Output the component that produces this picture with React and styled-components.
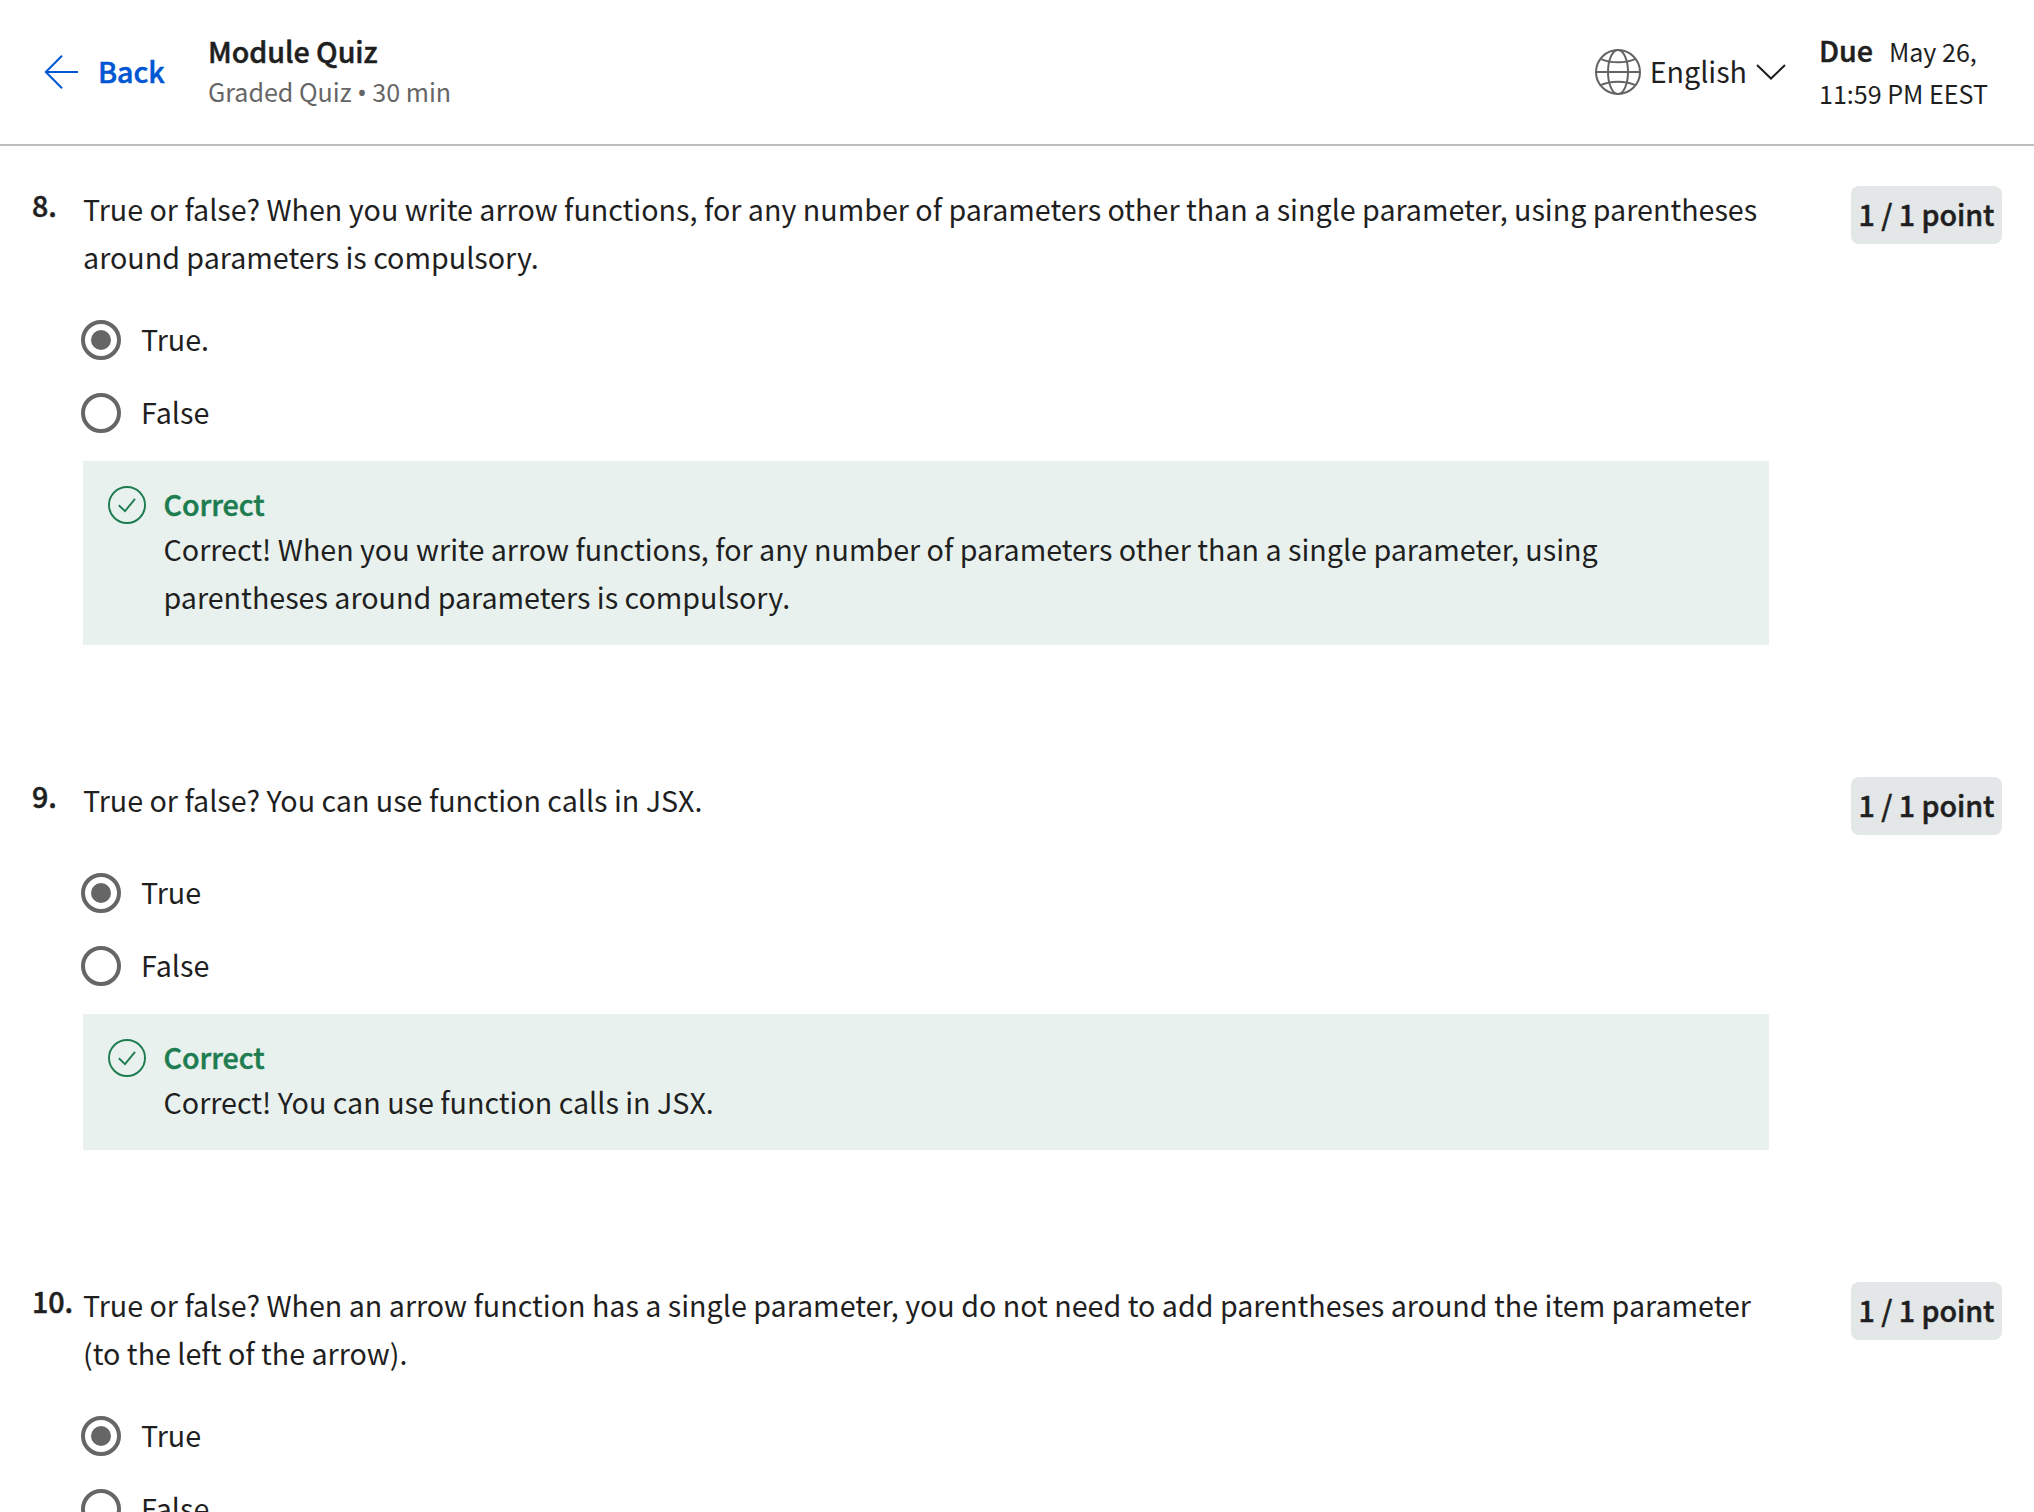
import React from "react";
import styled, { createGlobalStyle, css } from "styled-components";

const Global = createGlobalStyle`
  * { box-sizing: border-box; }
  html, body { margin: 0; height: 100%; overflow: hidden; }
  body {
    background: #fff;
    color: #1f1f1f;
    font-family: "Noto Sans CJK SC", "Noto Sans", sans-serif;
    font-size: 28.66px;
    line-height: 48px;
  }
`;

const semibold = css`
  font-weight: 500;
  letter-spacing: -0.05px;
  -webkit-text-stroke: 0.5px currentColor;
`;

const Page = styled.div`
  height: 1512px;
  overflow: hidden;
`;

const Header = styled.header`
  display: flex;
  align-items: center;
  justify-content: space-between;
  height: 146px;
  padding: 0 33px 0 44px;
  border-bottom: 2px solid #bdbdbd;
`;

const HeaderSide = styled.div`
  display: flex;
  align-items: center;
`;

const BackLink = styled.a`
  display: flex;
  align-items: center;
  gap: 18px;
  width: 164px;
  color: #0056d2;
  text-decoration: none;
  ${semibold}
`;

const BackText = styled.span`
  padding-bottom: 2px;
`;

const Titles = styled.div`
  display: flex;
  flex-direction: column;
  padding-bottom: 1px;
`;

const Title = styled.h1`
  margin: 0;
  font-size: 28.66px;
  line-height: 40px;
  ${semibold}
`;

const Subtitle = styled.span`
  color: #666;
  font-size: 25.07px;
  line-height: 40px;
`;

const Bullet = styled.span`
  font-family: "Noto Sans", sans-serif;
`;

const Language = styled.button`
  display: flex;
  align-items: center;
  padding: 0;
  border: 0;
  background: none;
  color: inherit;
  font: inherit;
`;

const LanguageName = styled.span`
  margin: 0 9px;
  padding-bottom: 2px;
`;

const Due = styled.div`
  display: flex;
  flex-direction: column;
  width: 182px;
  margin-left: 33px;
  font-size: 25.07px;
  line-height: 42px;
`;

const DueRow = styled.div`
  display: flex;
  align-items: baseline;
  gap: 16px;
  height: 42px;
`;

const DueLabel = styled.span`
  font-size: 28.66px;
  line-height: 40px;
  ${semibold}
`;

const Questions = styled.main`
  display: flex;
  flex-direction: column;
  gap: 132px;
  padding: 40px 32px 0;
`;

const Question = styled.section`
  display: grid;
  grid-template-columns: 51px 1686px 1fr;
`;

const Number = styled.span`
  margin-top: -5px;
  white-space: nowrap;
  ${semibold}
`;

const Prompt = styled.p`
  margin: -1px 0 1px;
`;

const Points = styled.span`
  justify-self: end;
  align-self: start;
  width: 151px;
  height: 58px;
  border-radius: 8px;
  background: #e3e7e8;
  line-height: 56px;
  text-align: center;
  ${semibold}
`;

const Answers = styled.div`
  grid-column: 2;
  display: flex;
  flex-direction: column;
  gap: 33px;
  margin: 38px 0 28px -2px;
`;

const Answer = styled.label`
  display: flex;
  align-items: center;
  gap: 20px;
  height: 40px;
  line-height: 38px;
`;

const AnswerText = styled.span`
  padding-bottom: 2px;
`;

const Radio = styled.span`
  display: grid;
  place-items: center;
  width: 40px;
  height: 40px;
  border: 4px solid #666;
  border-radius: 50%;

  &::after {
    content: "";
    width: 20px;
    height: 20px;
    border-radius: 50%;
    background: ${(p) => (p.$checked ? "#666" : "transparent")};
  }
`;

const Feedback = styled.div`
  grid-column: 2;
  display: flex;
  gap: 17.5px;
  padding: 25px 80px 24px 25px;
  background: #e8f1ed;

  svg {
    flex: none;
  }
`;

const FeedbackText = styled.div`
  display: flex;
  flex-direction: column;
`;

const Verdict = styled.span`
  height: 39px;
  color: #1d7c50;
  line-height: 36px;
  ${semibold}
`;

const ArrowIcon = () => (
  <svg width="36" height="36" viewBox="0 0 36 36" fill="none" stroke="#0056d2" strokeWidth="2">
    <path d="M34 18H2.5M18 1.7 1.8 18 18 34.3" />
  </svg>
);

const GlobeIcon = () => (
  <svg width="46" height="46" viewBox="0 0 46 46" fill="none" stroke="#636363" strokeWidth="2">
    <circle cx="23" cy="23" r="22" />
    <ellipse cx="23" cy="23" rx="10" ry="22" />
    <path d="M1 23h44M5.5 9.8c10 4.6 25 4.6 35 0M5.5 36.2c10-4.6 25-4.6 35 0" />
  </svg>
);

const ChevronIcon = () => (
  <svg width="30" height="16" viewBox="0 0 30 16" fill="none" stroke="#1f1f1f" strokeWidth="2">
    <path d="M1 1l14 13.5L29 1" />
  </svg>
);

const CheckIcon = () => (
  <svg width="38" height="38" viewBox="0 0 38 38" fill="none" stroke="#1d7c50" strokeWidth="1.9">
    <circle cx="19" cy="19" r="18" />
    <path d="M10.8 19.2l6.2 6L27 12.8" />
  </svg>
);

const questions = [
  {
    number: 8,
    prompt:
      "True or false? When you write arrow functions, for any number of parameters other than a single parameter, using parentheses around parameters is compulsory.",
    answers: ["True.", "False"],
    feedback:
      "Correct! When you write arrow functions, for any number of parameters other than a single parameter, using parentheses around parameters is compulsory.",
  },
  {
    number: 9,
    prompt: "True or false? You can use function calls in JSX.",
    answers: ["True", "False"],
    feedback: "Correct! You can use function calls in JSX.",
  },
  {
    number: 10,
    prompt:
      "True or false? When an arrow function has a single parameter, you do not need to add parentheses around the item parameter (to the left of the arrow).",
    answers: ["True", "False"],
  },
];

export default function App() {
  return (
    <Page>
      <Global />
      <Header>
        <HeaderSide>
          <BackLink>
            <ArrowIcon />
            <BackText>Back</BackText>
          </BackLink>
          <Titles>
            <Title>Module Quiz</Title>
            <Subtitle>
              Graded Quiz <Bullet>•</Bullet> 30 min
            </Subtitle>
          </Titles>
        </HeaderSide>
        <HeaderSide>
          <Language>
            <GlobeIcon />
            <LanguageName>English</LanguageName>
            <ChevronIcon />
          </Language>
          <Due>
            <DueRow>
              <DueLabel>Due</DueLabel>
              <span>May 26,</span>
            </DueRow>
            <DueRow>11:59 PM EEST</DueRow>
          </Due>
        </HeaderSide>
      </Header>
      <Questions>
        {questions.map((q) => (
          <Question key={q.number}>
            <Number>{q.number}.</Number>
            <Prompt>{q.prompt}</Prompt>
            <Points>1 / 1 point</Points>
            <Answers>
              {q.answers.map((answer, i) => (
                <Answer key={answer}>
                  <Radio $checked={i === 0} />
                  <AnswerText>{answer}</AnswerText>
                </Answer>
              ))}
            </Answers>
            {q.feedback && (
              <Feedback>
                <CheckIcon />
                <FeedbackText>
                  <Verdict>Correct</Verdict>
                  {q.feedback}
                </FeedbackText>
              </Feedback>
            )}
          </Question>
        ))}
      </Questions>
    </Page>
  );
}
